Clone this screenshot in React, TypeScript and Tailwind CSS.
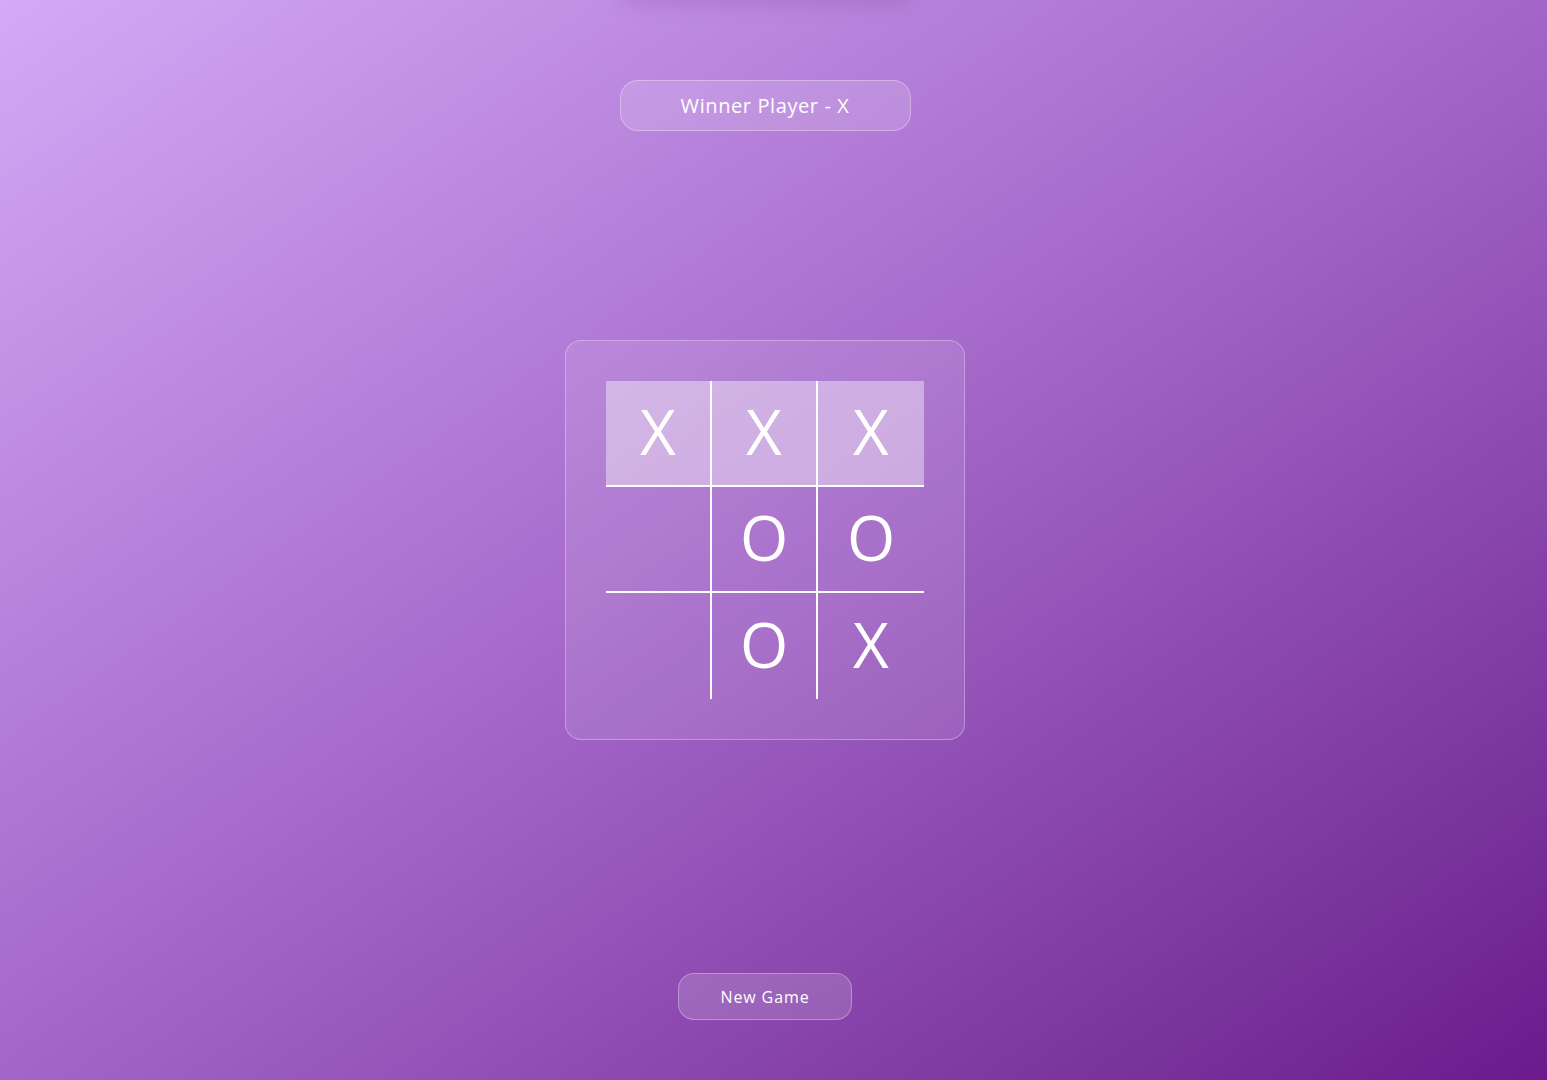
import React from "react";

type Cell = "X" | "O" | "";

const board: Cell[] = ["X", "X", "X", "", "O", "O", "", "O", "X"];
const winning = [0, 1, 2];

const cellBorders = [
  "border-r-2 border-b-2",
  "border-r-2 border-b-2",
  "border-b-2",
  "border-r-2 border-b-2",
  "border-r-2 border-b-2",
  "border-b-2",
  "border-r-2",
  "border-r-2",
  "",
];

export default function App() {
  return (
    <div
      className="relative h-screen w-full overflow-hidden bg-gradient-to-br from-[#d4a9f6] via-[#a366c8] to-[#6a1a8c] text-white"
      style={{ fontFamily: '"Open Sans", "Noto Sans", sans-serif' }}
    >
      <div className="pointer-events-none absolute left-[620px] top-[-30px] h-[30px] w-[290px] rounded-full shadow-[0_0_24px_rgba(60,0,90,0.18)]" />
      <div className="grid h-full grid-rows-[1fr_auto_1fr] justify-items-center pr-[17px]">
        <div className="self-start pt-20">
          <div className="flex h-[51px] w-[291px] items-center justify-center rounded-[18px] border border-white/30 bg-white/15 text-[20px] tracking-[0.6px]">
            Winner Player - X
          </div>
        </div>
        <div className="rounded-2xl border border-white/30 bg-white/10 p-10">
          <div className="grid grid-cols-[repeat(3,106px)] grid-rows-[repeat(3,106px)]">
            {board.map((c, i) => (
              <div
                key={i}
                className={`flex items-center justify-center border-white pb-1 text-[62px] font-normal leading-none ${cellBorders[i]} ${
                  winning.includes(i) ? "bg-white/40" : ""
                }`}
              >
                {c}
              </div>
            ))}
          </div>
        </div>
        <div className="self-end pb-[60px]">
          <button className="flex h-[47px] w-[174px] items-center justify-center rounded-2xl border border-white/30 bg-white/15 text-[16px] font-medium tracking-[0.9px]">
            New Game
          </button>
        </div>
      </div>
    </div>
  );
}
